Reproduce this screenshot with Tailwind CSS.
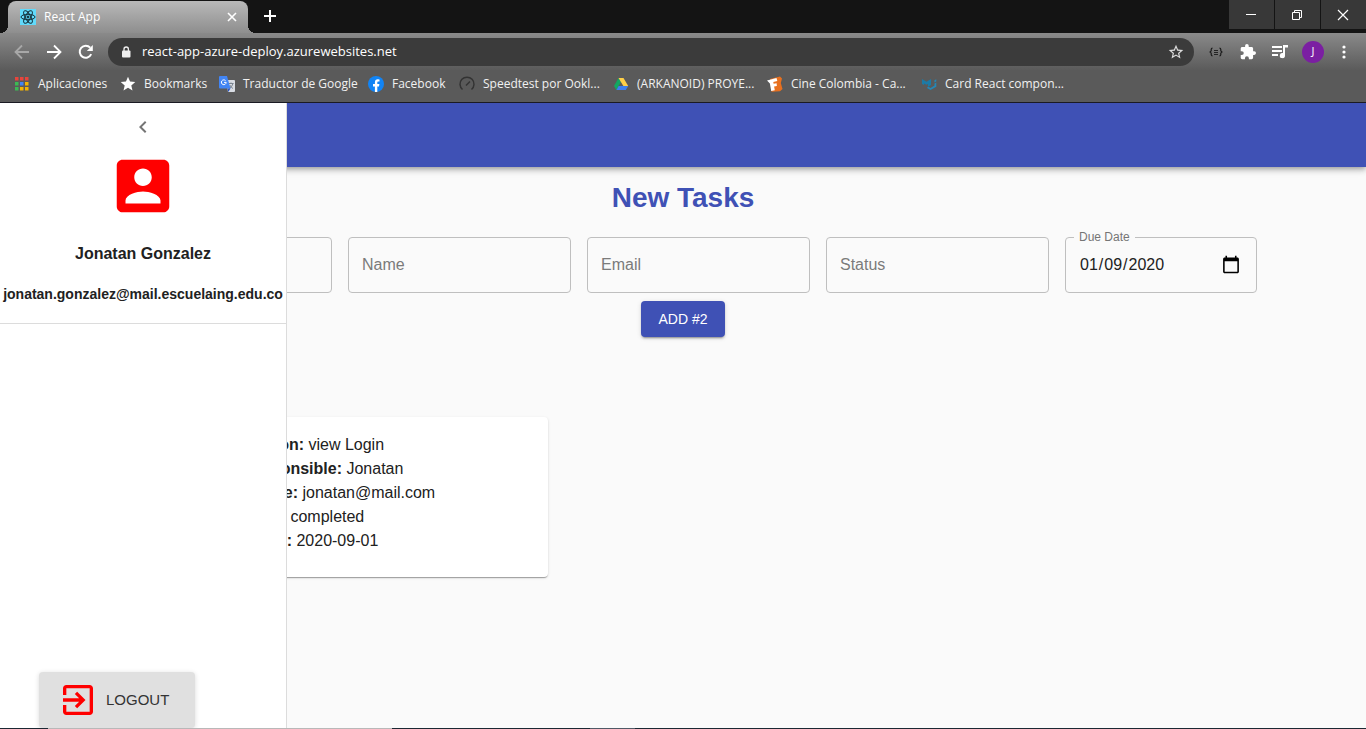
<!DOCTYPE html>
<html lang="en">
<head>
<meta charset="utf-8">
<title>React App</title>
<script src="https://cdn.jsdelivr.net/npm/@tailwindcss/browser@4"></script>
</head>
<body class="flex h-screen flex-col overflow-hidden bg-[#fafafa] font-['Liberation_Sans',sans-serif] text-base text-[#212121]">

<!-- Browser window frame -->
<header class="shrink-0 border-b border-[#1a1a22] bg-[#141414] font-['Open_Sans',sans-serif] text-xs text-white">
  <div class="flex h-[33px] items-start">
    <div class="relative ml-2 mt-px flex h-8 w-60 items-center rounded-t-lg bg-linear-to-b from-[#b9b9b9] to-[#8e8e8e] pl-3 pr-2">
      <span class="absolute -left-2 bottom-0 size-2 bg-[radial-gradient(circle_at_0_0,#141414_8px,#8e8e8e_8px)]"></span>
      <span class="absolute -right-2 bottom-0 size-2 bg-[radial-gradient(circle_at_100%_0,#141414_8px,#8e8e8e_8px)]"></span>
      <svg class="size-4" viewBox="0 0 16 16" fill="none" stroke="#14303a"><rect width="16" height="16" fill="#61dafb" stroke="none"/><ellipse cx="8" cy="8" rx="7" ry="2.7"/><ellipse cx="8" cy="8" rx="7" ry="2.7" transform="rotate(60 8 8)"/><ellipse cx="8" cy="8" rx="7" ry="2.7" transform="rotate(120 8 8)"/><circle cx="8" cy="8" r="1" fill="#14303a"/></svg>
      <span class="ml-2 grow">React App</span>
      <button aria-label="Close tab" class="flex size-4 items-center justify-center"><svg class="size-2.5" viewBox="0 0 10 10" stroke="#fff" stroke-width="1.6"><path d="M1 1l8 8M9 1l-8 8"/></svg></button>
    </div>
    <button aria-label="New tab" class="ml-3.5 mt-2 flex size-4 items-center justify-center"><svg class="size-3" viewBox="0 0 12 12" stroke="#fff" stroke-width="2"><path d="M6 0v12M0 6h12"/></svg></button>
    <div class="ml-auto flex gap-px">
      <button aria-label="Minimize" class="flex h-[29px] w-[45px] items-center justify-center bg-[#383838] pr-0.5"><svg class="size-3" viewBox="0 0 12 12" stroke="#fff"><path d="M1 5.500h10"/></svg></button>
      <button aria-label="Restore" class="flex h-[29px] w-[45px] items-center justify-center bg-[#383838] pr-0.5"><svg class="size-3" viewBox="0 0 12 12" fill="none" stroke="#fff"><path d="M1.500 3.500h7v7h-7zM3.500 3.500v-2h7v7h-2"/></svg></button>
      <button aria-label="Close" class="flex h-[29px] w-[45px] items-center justify-center bg-[#383838] pr-0.5"><svg class="size-3" viewBox="0 0 12 12" stroke="#fff" stroke-width="1.200"><path d="M1 1l10 10M11 1L1 11"/></svg></button>
    </div>
  </div>

  <div class="flex h-[37px] items-center bg-linear-to-b from-[#8a8a8a] to-[#5b5b5b] pl-3.5 pr-3.5">
    <button aria-label="Back" class="size-4"><svg viewBox="0 0 16 16" fill="none" stroke="#a8a8a8" stroke-width="1.800"><path d="M15 8H2M8 1.500L1.500 8 8 14.500"/></svg></button>
    <button aria-label="Forward" class="ml-4 size-4"><svg viewBox="0 0 16 16" fill="none" stroke="#fff" stroke-width="1.800"><path d="M1 8h13M8 1.500L14.500 8 8 14.500"/></svg></button>
    <button aria-label="Reload" class="ml-4 size-4"><svg viewBox="0 0 16 16" fill="none" stroke="#fff" stroke-width="2"><path d="M13.200 10.200A6 6 0 1 1 12.200 3.700"/><path d="M14.800 1v6h-6z" fill="#fff" stroke="none"/></svg></button>
    <div class="ml-3.5 flex h-7 grow items-center rounded-full bg-[#3b3b3b] pl-3 pr-2.5">
      <svg class="size-3" viewBox="0 0 12 12"><rect x="2" y="4.500" width="8.500" height="7" rx="1" fill="#eee"/><path d="M4 5V3.200a2.200 2.200 0 0 1 4.400 0V5" fill="none" stroke="#eee" stroke-width="1.300"/></svg>
      <input aria-label="Address" type="text" value="react-app-azure-deploy.azurewebsites.net" class="ml-2.5 min-w-0 grow bg-transparent text-[13px] outline-none">
      <button aria-label="Bookmark this page" class="size-4"><svg viewBox="1 1 22 22" fill="#ddd"><path d="M22 9.240l-7.190-.62L12 2 9.190 8.630 2 9.240l5.460 4.730L5.820 21 12 17.270 18.180 21l-1.630-7.030L22 9.240zM12 15.400l-3.760 2.270 1-4.280-3.320-2.880 4.380-.38L12 6.100l1.710 4.040 4.380.38-3.320 2.880 1 4.280L12 15.400z"/></svg></button>
    </div>
    <button aria-label="JSON viewer" class="ml-3.5 flex size-4 items-center justify-center"><svg class="h-2.5 w-3.5" viewBox="0 0 14 10" fill="none" stroke="#1c1c1c" stroke-width="1.200"><path d="M3.500 1.200Q2.200 1.200 2.200 2.500v1.300L1 5l1.200 1.200v1.300q0 1.300 1.300 1.300M10.500 1.200q1.300 0 1.300 1.300v1.300L13 5l-1.200 1.200v1.300q0 1.300-1.300 1.300"/><path d="M5 3.500h4M5 5.500h4M5 7.500h4" stroke-width=".9"/></svg></button>
    <button aria-label="Extensions" class="ml-4 size-4"><svg viewBox="1 1 22 22" fill="#fff"><path d="M20.500 11H19V7c0-1.100-.9-2-2-2h-4V3.500a2.500 2.500 0 0 0-5 0V5H4c-1.100 0-2 .9-2 2v3.800h1.500a2.700 2.700 0 0 1 0 5.400H2V20c0 1.100.9 2 2 2h3.800v-1.500a2.700 2.700 0 0 1 5.400 0V22H17c1.100 0 2-.9 2-2v-4h1.500a2.500 2.500 0 0 0 0-5z"/></svg></button>
    <button aria-label="Media controls" class="ml-3.5 flex h-4 w-5 items-center justify-center"><svg class="h-3.5 w-4" viewBox="0 0 16 14"><path d="M0 2h10M0 6h10M0 10h6" stroke="#fff" stroke-width="1.800"/><path d="M11 0h5v2.500h-3V10.500a2.600 2.600 0 1 1-2-2.500z" fill="#fff"/></svg></button>
    <button aria-label="Profile" class="ml-3 flex size-[22px] items-center justify-center rounded-full bg-[#7b1fa2] text-[11px]">J</button>
    <button aria-label="Menu" class="ml-3 flex size-4 items-center justify-center"><svg class="h-3.5 w-1" viewBox="0 0 4 14" fill="#fff"><circle cx="2" cy="2" r="1.600"/><circle cx="2" cy="7" r="1.600"/><circle cx="2" cy="12" r="1.600"/></svg></button>
  </div>

  <nav class="flex h-8 items-center bg-[#5a5a5a] pb-1 pl-3.5 text-[#f1f1f1]">
    <a href="#" class="flex w-[106px] items-center gap-2"><svg class="size-4" viewBox="0 0 16 16"><path d="M1 1h3.500v3.500H1zM6 1h3.500v3.500H6zM11 1h3.500v3.500h-3.500z" fill="#e8453c"/><path d="M1 6h3.500v3.500H1z" fill="#3cba54"/><path d="M6 6h3.500v3.500H6z" fill="#4285f4"/><path d="M11 6h3.500v3.500h-3.500z" fill="#f4b400"/><path d="M1 11h3.500v3.500H1z" fill="#3cba54"/><path d="M6 11h3.500v3.500H6zM11 11h3.500v3.500h-3.500z" fill="#f4b400"/></svg>Aplicaciones</a>
    <a href="#" class="flex w-[99px] items-center gap-2"><svg class="size-4" viewBox="1 1 22 22" fill="#fff"><path d="M12 17.270L18.180 21l-1.640-7.030L22 9.240l-7.190-.61L12 2 9.190 8.630 2 9.240l5.460 4.730L5.820 21z"/></svg>Bookmarks</a>
    <a href="#" class="flex w-[149px] items-center gap-2"><svg class="size-4" viewBox="0 0 16 16"><path d="M7 4h8a1 1 0 0 1 1 1v10a1 1 0 0 1-1 1H9z" fill="#d8dce3"/><path d="M9.500 7.500h5M12 6.500v1M14 7.500q-.8 3.500-4 5M10.800 9q1.200 2.500 3.200 3.500" stroke="#7b8490" fill="none"/><path d="M1 0h7l3.500 12.500H1a1 1 0 0 1-1-1V1a1 1 0 0 1 1-1z" fill="#4285f4"/><path d="M8.500 12.500h3L9.300 16z" fill="#2a56c6"/><path d="M6.600 4.700A2.400 2.400 0 1 0 7.200 6.400H5" stroke="#fff" fill="none"/></svg>Traductor de Google</a>
    <a href="#" class="flex w-[91px] items-center gap-2"><svg class="size-4" viewBox="0 0 16 16"><circle cx="8" cy="8" r="8" fill="#1184f5"/><path d="M6.900 16v-5.600H5V8h1.900V6.400c0-2 1.100-3.100 2.900-3.100l1.700.1v2h-1c-.9 0-1.200.5-1.200 1.200V8h2.100l-.4 2.400H9.300V16z" fill="#fff"/></svg>Facebook</a>
    <a href="#" class="flex w-[154px] items-center gap-2"><svg class="size-4" viewBox="0 0 16 16" fill="none" stroke="#333" stroke-width="1.500"><path d="M3.500 13.500a7 7 0 1 1 9 0M7 9.500L11 5.500"/></svg>Speedtest por Ookl...</a>
    <a href="#" class="flex w-[154px] items-center gap-2"><svg class="size-4" viewBox="0 0 16 16"><path d="M5.500 2L1 10l2.400 4 4.500-8z" fill="#11a861"/><path d="M5.500 2h5l4.700 8h-4.800z" fill="#ffcf48"/><path d="M5.600 10h9.600l-2.400 4H3.400z" fill="#3d7ff0"/></svg>(ARKANOID) PROYE...</a>
    <a href="#" class="flex w-[154px] items-center gap-2"><svg class="size-4" viewBox="0 0 16 16"><path d="M3 3l10-2.500 2 2-1.200 4.500 1.700 6-2.500 2.200-8.500.6z" fill="#e8701f"/><path d="M0 4.500L9.500 2l.8 3-4 .9.300 1.800 3-.5.300 2.700-2.800.5.700 3.900-3.600.7L2.900 7.500z" fill="#fff"/></svg>Cine Colombia - Ca...</a>
    <a href="#" class="flex items-center gap-2"><svg class="size-4" viewBox="0 0 16 16"><path d="M1 3l4.500 2.700L10 3v6l-3 1.700V8L5.500 8.800 3 7.400V9L1 8z" fill="#1c7ba6"/><path d="M7 10.500l2.500 1.400 4-2.300V7.500l1.800-1v4.300L9.500 14 6 12zM13.400 4.300L15.300 3.200v2.200l-1.900 1.100z" fill="#2487b5"/></svg>Card React compon...</a>
  </nav>
</header>

<div class="relative flex min-h-0 grow flex-col overflow-hidden">
  <div class="z-10 h-16 shrink-0 bg-[#3f51b5] shadow-[0_2px_4px_-1px_rgba(0,0,0,0.2),0_4px_5px_0_rgba(0,0,0,0.14),0_1px_10px_0_rgba(0,0,0,0.12)]"></div>

  <main class="flex flex-col px-[109px]">
    <h1 class="mt-[13px] text-center text-[28px] leading-9 font-bold text-[#3f51b5]">New Tasks</h1>
    <form class="mt-[21px] flex flex-col items-center gap-2">
      <div class="flex w-full justify-center gap-4">
        <input aria-label="Task" type="text" class="h-14 min-w-0 flex-1 rounded border border-[#bfbfbf] px-[13px]">
        <input aria-label="Name" placeholder="Name" type="text" class="h-14 min-w-0 flex-1 rounded border border-[#bfbfbf] px-[13px] placeholder:text-[#7b7b7b]">
        <input aria-label="Email" placeholder="Email" type="text" class="h-14 min-w-0 flex-1 rounded border border-[#bfbfbf] px-[13px] placeholder:text-[#7b7b7b]">
        <input aria-label="Status" placeholder="Status" type="text" class="h-14 min-w-0 flex-1 rounded border border-[#bfbfbf] px-[13px] placeholder:text-[#7b7b7b]">
        <div class="relative w-48 shrink-0">
          <label for="due" class="absolute -top-2 left-[9px] bg-[#fafafa] px-[5px] text-xs leading-4 text-[#757575]">Due Date</label>
          <input id="due" type="date" value="2020-01-09" class="h-14 w-full rounded border border-[#bfbfbf] px-[13px] [&::-webkit-calendar-picker-indicator]:mr-0.5 [&::-webkit-calendar-picker-indicator]:size-5 [&::-webkit-calendar-picker-indicator]:p-0">
        </div>
      </div>
      <button type="button" class="h-9 rounded bg-[#3f51b5] px-[17px] text-sm text-white shadow-[0_3px_1px_-2px_rgba(0,0,0,0.2),0_2px_2px_0_rgba(0,0,0,0.14),0_1px_5px_0_rgba(0,0,0,0.12)]">ADD #2</button>
    </form>
    <section class="mt-20 h-40 w-[439px] rounded bg-white p-4 leading-6 shadow-[0_2px_1px_-1px_rgba(0,0,0,0.2),0_1px_1px_0_rgba(0,0,0,0.14),0_1px_3px_0_rgba(0,0,0,0.12)]">
      <p><b class="inline-block w-[179px] text-right">Description:</b> view Login</p>
      <p><b class="inline-block w-[217px] text-right">Responsible:</b> Jonatan</p>
      <p><b class="inline-block w-[173px] text-right">Name:</b> jonatan@mail.com</p>
      <p><b class="inline-block w-[161px] text-right">Status:</b> completed</p>
      <p><b class="inline-block w-[167px] text-right">Due Date:</b> 2020-09-01</p>
    </section>
  </main>

  <!-- Drawer over the page -->
  <aside class="absolute inset-y-0 left-0 z-20 flex w-[287px] flex-col items-center border-r border-[#dcdcdc] bg-white">
    <button aria-label="Close drawer" class="mt-3 size-6"><svg viewBox="0 0 24 24" fill="#757575"><path d="M15.410 7.410L14 6l-6 6 6 6 1.410-1.410L10.830 12z"/></svg></button>
    <svg class="mt-3 size-[70px]" viewBox="0 0 24 24" fill="#f00"><path d="M3 5v14c0 1.100.89 2 2 2h14c1.100 0 2-.9 2-2V5c0-1.100-.9-2-2-2H5c-1.110 0-2 .9-2 2zm12 4c0 1.660-1.340 3-3 3s-3-1.340-3-3 1.340-3 3-3 3 1.340 3 3zm-9 8c0-2 4-3.100 6-3.100s6 1.100 6 3.100v1H6v-1z"/></svg>
    <h2 class="mt-[21px] leading-6 font-bold">Jonatan Gonzalez</h2>
    <p class="mt-4 text-sm leading-6 font-bold">jonatan.gonzalez@mail.escuelaing.edu.co</p>
    <hr class="mt-[17px] w-full border-[#dcdcdc]">
    <button class="mt-auto ml-[39px] flex h-14 w-[156px] items-center gap-2 self-start rounded bg-[#e0e0e0] pl-[19px] text-[15px] text-[#333] shadow-[0_1px_5px_rgba(0,0,0,0.15)]">
      <svg class="size-10" viewBox="0 0 24 24" fill="#f00"><path d="M10.090 15.590L11.500 17l5-5-5-5-1.410 1.410L12.670 11H3v2h9.670l-2.580 2.590zM19 3H5c-1.110 0-2 .9-2 2v4h2V5h14v14H5v-4H3v4c0 1.100.89 2 2 2h14c1.100 0 2-.9 2-2V5c0-1.100-.9-2-2-2z"/></svg>LOGOUT
    </button>
  </aside>
</div>

<!-- Upper edge of the taskbar -->
<footer class="flex h-px shrink-0 bg-[#1b2833]"><span class="ml-12 w-[344px] bg-[#b8b8b8]"></span><span class="ml-[198px] w-[45px] bg-[#505a66]"></span></footer>
</body>
</html>
